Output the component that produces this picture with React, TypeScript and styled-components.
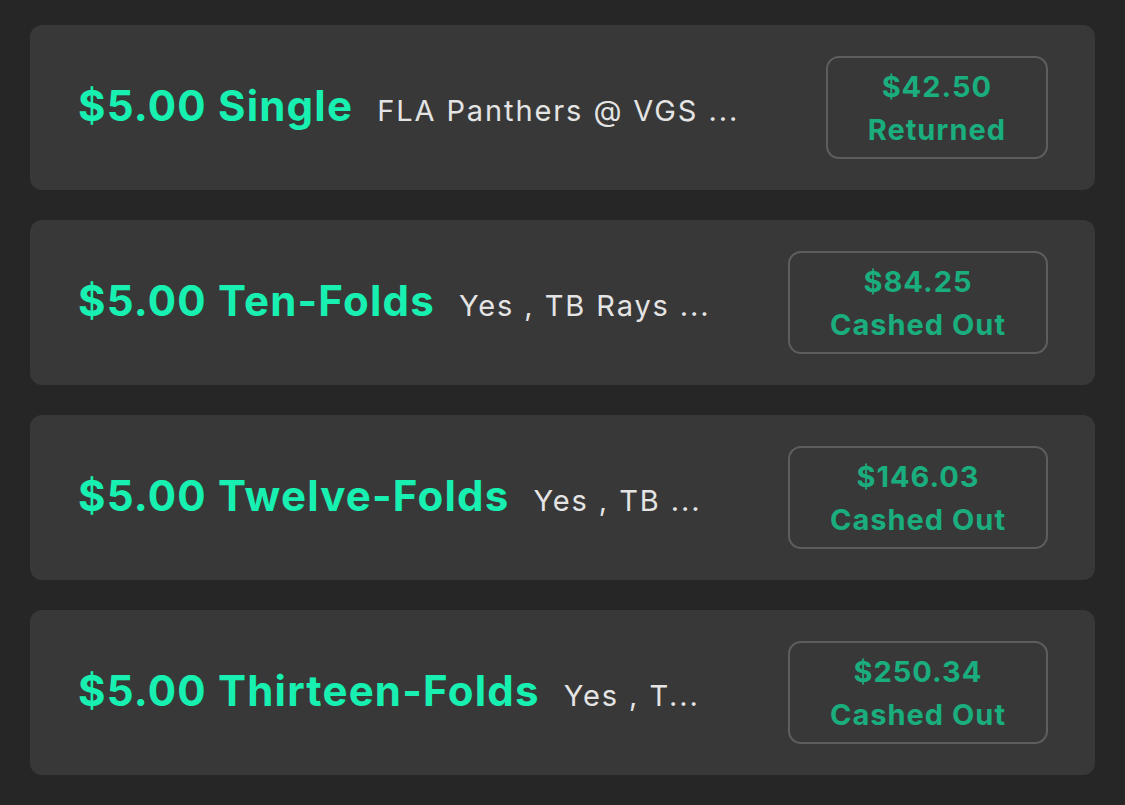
import { createGlobalStyle, styled } from 'styled-components';

const GlobalStyle = createGlobalStyle`
  html, body {
    margin: 0;
    padding: 0;
    background: #262626;
  }
  body {
    font-family: Inter, "Noto Sans", "Liberation Sans", sans-serif;
  }
`;

const StyledList = styled.section`
  display: flex;
  flex-direction: column;
  gap: 30px;
  padding: 25px 30px 30px;
  min-height: 805px;
  box-sizing: border-box;
`;

const Card = styled.div`
  display: flex;
  align-items: center;
  height: 165px;
  box-sizing: border-box;
  padding: 0 47px 0 48px;
  background: #383838;
  border-radius: 12px;
`;

const Heading = styled.div`
  display: flex;
  align-items: baseline;
  margin-top: -4px;
`;

const Title = styled.h2`
  margin: 0;
  font-size: 42px;
  font-weight: 700;
  color: #17f0b0;
  white-space: nowrap;
  letter-spacing: 1.2px;
`;

const Legs = styled.span`
  margin-left: 24px;
  font-size: 29px;
  font-weight: 400;
  color: #e4e4e4;
  white-space: nowrap;
  letter-spacing: 1.9px;
`;

const Result = styled.div`
  margin-left: auto;
  display: flex;
  flex-direction: column;
  align-items: center;
  justify-content: center;
  height: 103px;
  box-sizing: border-box;
  padding: 0 40px;
  border: 2px solid #5e5e5e;
  border-radius: 13px;
  color: #1aae7e;
  font-weight: 700;
  font-size: 29px;
  line-height: 43px;
  letter-spacing: 1px;
  white-space: nowrap;
`;

const bets = [
  { title: '$5.00 Single', legs: 'FLA Panthers @ VGS ...', amount: '$42.50', status: 'Returned' },
  { title: '$5.00 Ten-Folds', legs: 'Yes , TB Rays ...', amount: '$84.25', status: 'Cashed Out' },
  { title: '$5.00 Twelve-Folds', legs: 'Yes , TB ...', amount: '$146.03', status: 'Cashed Out' },
  { title: '$5.00 Thirteen-Folds', legs: 'Yes , T...', amount: '$250.34', status: 'Cashed Out' },
];

export default function App() {
  return (
    <>
      <GlobalStyle />
      <StyledList>
        {bets.map((bet) => (
          <Card key={bet.title}>
            <Heading>
              <Title>{bet.title}</Title>
              <Legs>{bet.legs}</Legs>
            </Heading>
            <Result>
              <span>{bet.amount}</span>
              <span>{bet.status}</span>
            </Result>
          </Card>
        ))}
      </StyledList>
    </>
  );
}
